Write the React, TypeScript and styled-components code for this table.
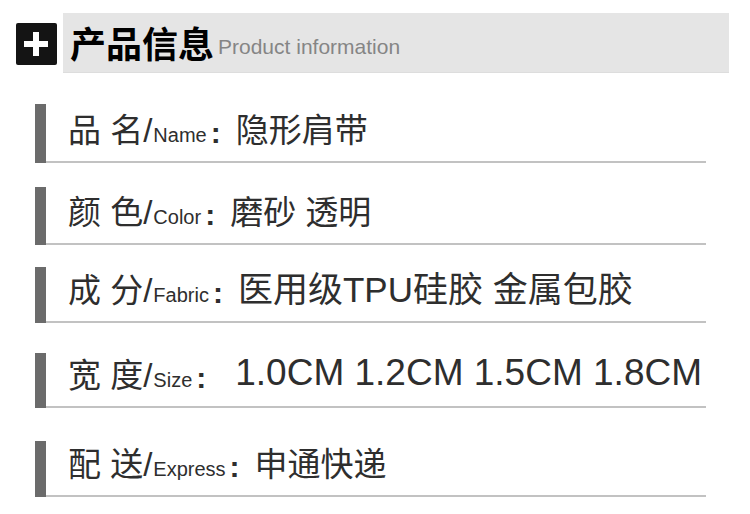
import styled, { createGlobalStyle } from "styled-components";

const GlobalStyle = createGlobalStyle`
    html, body {
        margin: 0;
        padding: 0;
        background: #fff;
    }
    body {
        font-family: "Liberation Sans", "Noto Sans CJK SC", sans-serif;
        color: #333;
    }
`;

type Spec = {
    label: string;
    en: string;
    value: string;
    gap: number;
    h: number;
    size: number;
    indent?: number;
};

const rows: Spec[] = [
    { label: "品 名", en: "Name", value: "隐形肩带", gap: 31, h: 59, size: 33 },
    { label: "颜 色", en: "Color", value: "磨砂 透明", gap: 24, h: 58, size: 33 },
    { label: "成 分", en: "Fabric", value: "医用级TPU硅胶 金属包胶", gap: 22, h: 56, size: 35 },
    { label: "宽 度", en: "Size", value: "1.0CM 1.2CM 1.5CM 1.8CM", gap: 30, h: 55, size: 37, indent: 14 },
    { label: "配 送", en: "Express", value: "申通快递", gap: 33, h: 56, size: 33 },
];

const PlusIcon = () => (
    <svg width="41" height="42" viewBox="0 0 41 42">
        <rect x="8" y="18" width="24" height="6" fill="#fff" />
        <rect x="17" y="9" width="6" height="24" fill="#fff" />
    </svg>
);

const App = () => {
    return (
        <>
            <GlobalStyle />
            <Page>
                <Header>
                    <IconBox>
                        <PlusIcon />
                    </IconBox>
                    <Band>
                        <Title>产品信息</Title>
                        <SubTitle>Product information</SubTitle>
                    </Band>
                </Header>
                <List>
                    {rows.map((r) => (
                        <Row key={r.en} $gap={r.gap} $h={r.h}>
                            <Bar />
                            <Line>
                                <Label>
                                    {r.label}/<En>{r.en}</En>
                                </Label>
                                <Colon>:</Colon>
                                <Value $size={r.size} $indent={r.indent ?? 0}>
                                    {r.value}
                                </Value>
                            </Line>
                        </Row>
                    ))}
                </List>
            </Page>
        </>
    );
};

export default App;

const Page = styled.div`
    width: 750px;
    height: 514px;
    padding-top: 13px;
    box-sizing: border-box;
    overflow: hidden;
`;

const Header = styled.div`
    display: flex;
    align-items: center;
    padding-left: 16px;
`;

const IconBox = styled.div`
    width: 41px;
    height: 42px;
    background: #141414;
    border-radius: 2px;
    display: flex;
    margin-top: 1px;
`;

const Band = styled.div`
    margin-left: 6px;
    width: 666px;
    height: 60px;
    background: #e5e5e5;
    display: flex;
    align-items: baseline;
    padding: 7px 0 0 7px;
    box-sizing: border-box;
    border-bottom: 1px solid #ddd;
`;

const Title = styled.span`
    font-family: "Noto Sans CJK SC", sans-serif;
    font-weight: 700;
    font-size: 36px;
    line-height: 44px;
    color: #000;
`;

const SubTitle = styled.span`
    font-family: "Liberation Sans", sans-serif;
    font-size: 21px;
    color: #858585;
    margin-left: 4px;
    position: relative;
    top: -4px;
`;

const List = styled.div`
    margin-left: 35px;
    width: 671px;
`;

const Row = styled.div<{ $gap: number; $h: number }>`
    display: flex;
    margin-top: ${(p) => p.$gap}px;
    height: ${(p) => p.$h}px;
`;

const Bar = styled.div`
    width: 11px;
    flex-shrink: 0;
    background: #6b6b6b;
`;

const Line = styled.div`
    flex: 1;
    display: flex;
    align-items: flex-end;
    padding: 0 0 12px 22px;
    border-bottom: 2px solid #c2c2c2;
    white-space: nowrap;
    line-height: 1.1;
`;

const Label = styled.span`
    font-size: 33px;
    color: #2e2e2e;
`;

const En = styled.span`
    font-size: 20px;
    margin-left: 1px;
`;

const Colon = styled.span`
    font-size: 30px;
    font-weight: 700;
    margin: 0 15px 0 4px;
    color: #2e2e2e;
`;

const Value = styled.span<{ $size: number; $indent: number }>`
    font-size: ${(p) => p.$size}px;
    margin-left: ${(p) => p.$indent}px;
    color: #2e2e2e;
`;
